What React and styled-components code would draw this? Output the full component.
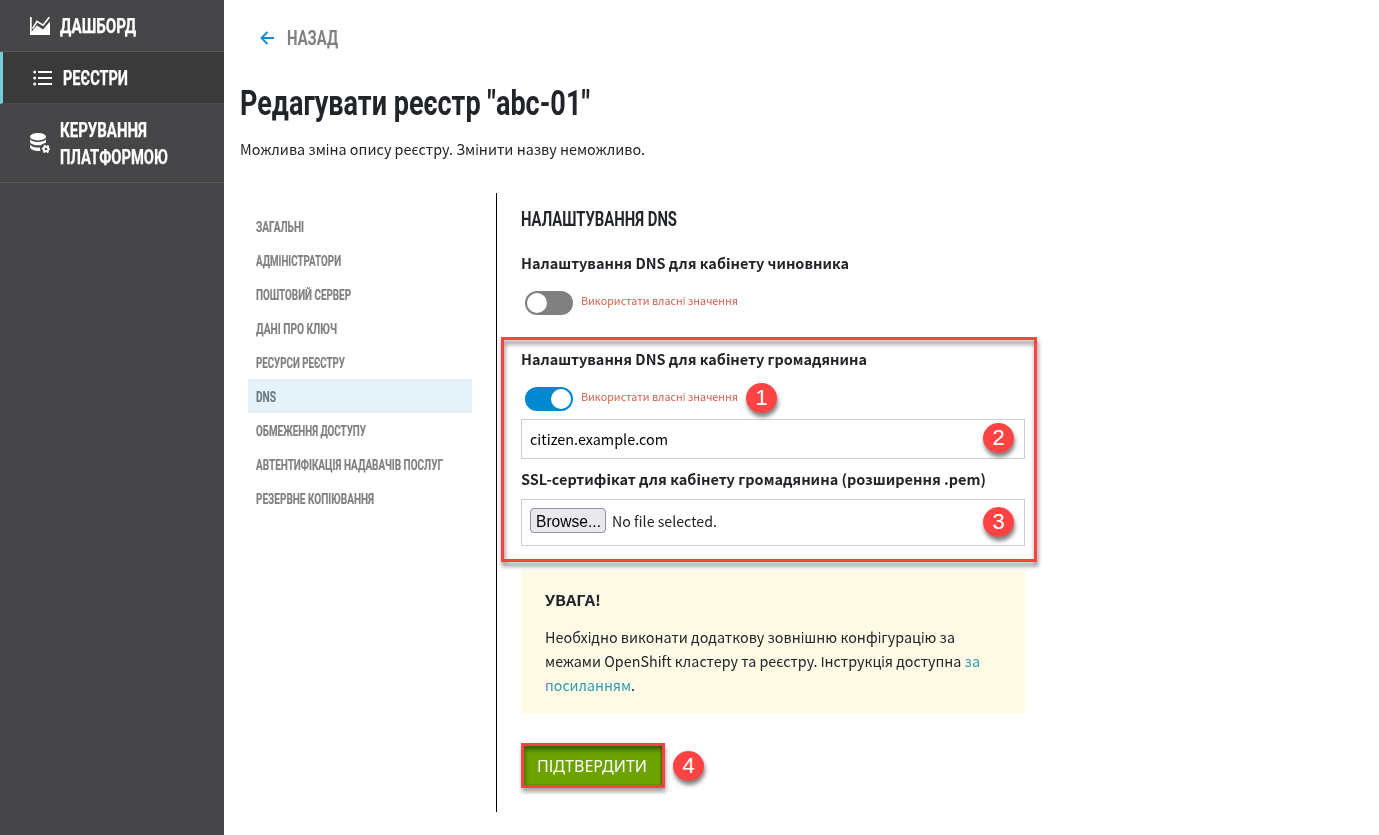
import React, { useLayoutEffect, useRef, useState } from "react";
import styled, { createGlobalStyle, css } from "styled-components";

const condensed = '"Roboto", "Liberation Sans", sans-serif';
const sans = '"Noto Sans CJK JP", "DejaVu Sans Condensed", "DejaVu Sans", sans-serif';

const GlobalStyle = createGlobalStyle`
  * { box-sizing: border-box; }
  body { margin: 0; background: #fff; color: #212529; font: 400 14.5px/24px ${sans}; }
  h1, h2, h3, p, ul { margin: 0; padding: 0; font: inherit; }
`;

/* Text set to an exact measure: the glyphs are condensed to the given width. */
const Measure = styled.span`
  display: inline-block;
  width: ${(p) => p.$width}px;
  white-space: nowrap;
  vertical-align: top;
`;
const Glyphs = styled.span`
  display: inline-block;
  transform-origin: 0 50%;
  vertical-align: top;
`;
function Fit({ width, children }) {
  const ref = useRef(null);
  const [scale, setScale] = useState(1);
  useLayoutEffect(() => {
    setScale(width / ref.current.getBoundingClientRect().width);
  }, []);
  return (
    <Measure $width={width}>
      <Glyphs ref={ref} style={{ transform: `scaleX(${scale})` }}>{children}</Glyphs>
    </Measure>
  );
}

const Page = styled.div`
  display: flex;
  height: 835px;
  overflow: hidden;
`;
const Sidebar = styled.nav`
  flex: 0 0 224px;
  background: #464648;
`;
const NavItem = styled.a`
  display: flex;
  align-items: center;
  gap: 10px;
  padding: 12px 0 12px 30px;
  border-bottom: 1px solid #5a5a5b;
  color: #fff;
  font: 700 20px/27px ${condensed};
  -webkit-text-stroke: 0.25px currentColor;
  svg { display: block; flex: none; }
  ${(p) => p.$active && css`
    background: #3a3a3a;
    border-left: 3px solid #75cdd8;
    border-bottom-color: #4b4b4b;
  `}
`;
const NavLabel = styled.span`
  display: flex;
  flex-direction: column;
  padding-top: 1px;
  margin-bottom: -1px;
`;
const Main = styled.main`
  flex: 1;
  padding: 18px 0 0 16px;
`;
const Back = styled.a`
  display: flex;
  align-items: center;
  gap: 13px;
  height: 40px;
  padding-left: 20px;
  color: #808080;
  font: 700 20px/40px ${condensed};
`;
const Title = styled.h1`
  margin-top: 22px;
  font: 700 35px/48px ${condensed};
`;
const Description = styled.p`
  margin-top: 9px;
`;
const Columns = styled.div`
  display: flex;
  margin-top: 32px;
  height: 619px;
`;
const Tabs = styled.ul`
  width: 257px;
  padding: 16px 24px 0 8px;
  border-right: 1px solid #000;
  list-style: none;
`;
const Tab = styled.li`
  height: 34px;
  padding: 1px 0 0 8px;
  color: ${(p) => (p.$active ? "#6e7a82" : "#808080")};
  background: ${(p) => (p.$active ? "#e5f2fa" : "transparent")};
  font: 700 14px/35px ${condensed};
  -webkit-text-stroke: 0.2px currentColor;
`;
const Form = styled.form`
  width: 528px;
  padding: 14px 0 0 24px;
`;
const FormTitle = styled.h2`
  margin-bottom: 19px;
  font: 700 20px/24px ${condensed};
`;
const Section = styled.section`
  position: relative;
  margin-bottom: ${(p) => p.$gap}px;
`;
const Label = styled.h3`
  margin-bottom: ${(p) => p.$gap || 0}px;
  padding-top: 1px;
  height: 24px;
  font-weight: 700;
`;
const SwitchRow = styled.div`
  display: flex;
  gap: 8px;
  height: 24px;
  margin: 17px 0 8px 4px;
  color: #d1604d;
  font-size: 11px;
  line-height: 19px;
`;
const Track = styled.span`
  width: 48px;
  height: 24px;
  padding: 2px;
  border-radius: 12px;
  display: flex;
  justify-content: ${(p) => (p.$on ? "flex-end" : "flex-start")};
  background: ${(p) => (p.$on ? "#0089d0" : "#808080")};
`;
const Knob = styled.span`
  width: 20px;
  height: 20px;
  border-radius: 50%;
  background: #fff;
`;
const Field = styled.div`
  display: flex;
  align-items: flex-start;
  height: ${(p) => p.$height}px;
  padding: ${(p) => p.$top}px 8px 0;
  margin-bottom: 7px;
  border: 1px solid #ccccd9;
  color: ${(p) => p.$color || "#212529"};
`;
const Browse = styled.button`
  width: 76px;
  height: 25px;
  margin: 0 6px 0 0;
  padding: 0 0 0 5px;
  border: 1px solid #8f8f9d;
  border-radius: 4px;
  background: #e9e9ed;
  color: #000;
  text-align: left;
  font: 400 16px/25px "Liberation Sans", sans-serif;
`;
const FileName = styled.span`
  padding-top: 1px;
`;
const Highlight = styled.div`
  position: absolute;
  left: -20px;
  top: -9px;
  width: 536px;
  height: 225px;
  border: 3px solid #ff4343;
  filter: drop-shadow(1px 4px 2px rgba(0, 0, 0, 0.5));
  pointer-events: none;
`;
const Badge = styled.span`
  position: absolute;
  left: ${(p) => p.$x}px;
  top: ${(p) => p.$y}px;
  width: 31px;
  height: 30px;
  border-radius: 50%;
  background: #ff4343;
  box-shadow: 1px 4px 4px rgba(0, 0, 0, 0.5);
  color: #fff;
  text-align: center;
  font: 400 22px/30px "Liberation Sans", sans-serif;
`;
const Notice = styled.section`
  width: 504px;
  height: 143px;
  padding: 18px 24px 0;
  background: #fffae5;
`;
const NoticeTitle = styled.h3`
  margin-bottom: 13px;
  font-weight: 700;
`;
const Link = styled.a`
  color: #2a9db0;
`;
const Actions = styled.div`
  position: relative;
  margin-top: 30px;
`;
const Submit = styled.button`
  display: block;
  width: 144px;
  height: 45px;
  padding: 1px 0 0 13px;
  border: 3px solid #ff4343;
  background: #6ca300;
  box-shadow: inset 1px 4px 4px rgba(0, 0, 0, 0.4), inset -1px 0 2px rgba(0, 0, 0, 0.3), 1px 4px 4px rgba(0, 0, 0, 0.35);
  color: #fff;
  text-align: left;
  font: 400 17px/38px "Noto Sans", sans-serif;
`;

const ChartIcon = () => (
  <svg width="20" height="20" viewBox="0 0 20 20">
    <path d="M0 1H1.7V15.6L7 9.6L13 13.6L20 5.6V19H0Z" fill="#fff" />
    <path d="M2.6 12.6L7 5.4L13 9.2L19.3 1.2" fill="none" stroke="#fff" strokeWidth="1.7" />
  </svg>
);
const ListIcon = () => (
  <svg width="20" height="20" viewBox="0 0 20 20" fill="#fff">
    <path d="M5 3h14v2H5zM5 9h14v2H5zM5 15h14v2H5z" />
    <circle cx="1.7" cy="4" r="1.5" />
    <circle cx="1.7" cy="10" r="1.5" />
    <circle cx="1.7" cy="16" r="1.5" />
  </svg>
);
const DatabaseIcon = () => (
  <svg width="20" height="20" viewBox="0 0 20 20" fill="#fff">
    <ellipse cx="8" cy="3.7" rx="8" ry="3.7" />
    <path d="M0 6.2C2.5 9.8 13.5 9.8 16 6.2V9.4C14 10.2 12 11.2 10.6 12.2C6 12.7 1.5 11.8 0 9.2Z" />
    <path d="M0 11.4C2 14 6 14.8 10 14.5C9.8 15.8 10 17 10.5 18C5.5 18.4 1 17.2 0 14.6Z" />
    <circle cx="16" cy="16" r="2.3" fill="none" stroke="#fff" strokeWidth="1.9" />
    <circle cx="16" cy="16" r="3.6" fill="none" stroke="#fff" strokeWidth="1.4" strokeDasharray="1.9 1.87" strokeDashoffset="0.95" />
  </svg>
);
const ArrowIcon = () => (
  <svg width="14" height="14" viewBox="0 0 14 14" fill="none" stroke="#168ccd" strokeWidth="1.9">
    <path d="M14 7H1.5M7.5 1L1.5 7L7.5 13" />
  </svg>
);

const tabs = [
  ["ЗАГАЛЬНІ", 48],
  ["АДМІНІСТРАТОРИ", 85],
  ["ПОШТОВИЙ СЕРВЕР", 95],
  ["ДАНІ ПРО КЛЮЧ", 81],
  ["РЕСУРСИ РЕЄСТРУ", 89],
  ["DNS", 20],
  ["ОБМЕЖЕННЯ ДОСТУПУ", 110],
  ["АВТЕНТИФІКАЦІЯ НАДАВАЧІВ ПОСЛУГ", 187],
  ["РЕЗЕРВНЕ КОПІЮВАННЯ", 118],
];

const Switch = ({ on }) => (
  <SwitchRow>
    <Track $on={on}><Knob /></Track>
    <Fit width={157}>Використати власні значення</Fit>
  </SwitchRow>
);

export default function App() {
  return (
    <Page>
      <GlobalStyle />
      <Sidebar>
        <NavItem><ChartIcon /><NavLabel><Fit width={76}>ДАШБОРД</Fit></NavLabel></NavItem>
        <NavItem $active><ListIcon /><NavLabel><Fit width={65}>РЕЄСТРИ</Fit></NavLabel></NavItem>
        <NavItem>
          <DatabaseIcon />
          <NavLabel><Fit width={87}>КЕРУВАННЯ</Fit><Fit width={108}>ПЛАТФОРМОЮ</Fit></NavLabel>
        </NavItem>
      </Sidebar>
      <Main>
        <Back><ArrowIcon /><Fit width={51}>НАЗАД</Fit></Back>
        <Title><Fit width={350}>Редагувати реєстр "abc-01"</Fit></Title>
        <Description><Fit width={405}>Можлива зміна опису реєстру. Змінити назву неможливо.</Fit></Description>
        <Columns>
          <Tabs>
            {tabs.map(([text, width]) => (
              <Tab key={text} $active={text === "DNS"}><Fit width={width}>{text}</Fit></Tab>
            ))}
          </Tabs>
          <Form>
            <FormTitle><Fit width={156}>НАЛАШТУВАННЯ DNS</Fit></FormTitle>
            <Section $gap={31}>
              <Label><Fit width={328}>Налаштування DNS для кабінету чиновника</Fit></Label>
              <Switch />
            </Section>
            <Section $gap={24}>
              <Label><Fit width={346}>Налаштування DNS для кабінету громадянина</Fit></Label>
              <Switch on />
              <Field $height={40} $top={7} $color="#000"><Fit width={138}>citizen.example.com</Fit></Field>
              <Label $gap={9}><Fit width={465}>SSL-сертифікат для кабінету громадянина (розширення .pem)</Fit></Label>
              <Field $height={47} $top={8}>
                <Browse type="button"><Fit width={65}>Browse...</Fit></Browse>
                <FileName><Fit width={105}>No file selected.</Fit></FileName>
              </Field>
              <Highlight />
              <Badge $x={225} $y={37}>1</Badge>
              <Badge $x={462} $y={77}>2</Badge>
              <Badge $x={462} $y={161}>3</Badge>
            </Section>
            <Notice>
              <NoticeTitle><Fit width={56}>УВАГА!</Fit></NoticeTitle>
              <p>
                <Fit width={410}>Необхідно виконати додаткову зовнішню конфігурацію за</Fit>
                <Fit width={435}>межами OpenShift кластеру та реєстру. Інструкція доступна <Link>за</Link></Fit>
                <Fit width={90}><Link>посиланням</Link>.</Fit>
              </p>
            </Notice>
            <Actions>
              <Submit type="button"><Fit width={110}>ПІДТВЕРДИТИ</Fit></Submit>
              <Badge $x={152} $y={8}>4</Badge>
            </Actions>
          </Form>
        </Columns>
      </Main>
    </Page>
  );
}
